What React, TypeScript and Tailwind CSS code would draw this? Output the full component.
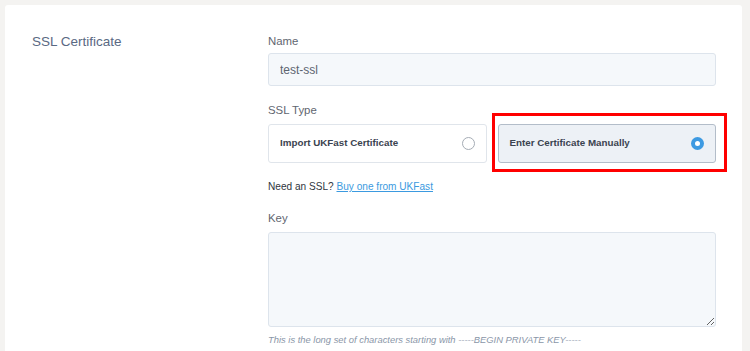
import { useState } from 'react'

const types = [
  { id: 'import', label: 'Import UKFast Certificate' },
  { id: 'manual', label: 'Enter Certificate Manually' },
]

export default function App() {
  const [sslType, setSslType] = useState('manual')

  return (
    <div
      className="h-screen overflow-hidden bg-[#f4f3f1] pl-[5px] pr-[8px] pt-[5px]"
      style={{ fontFamily: '"Liberation Sans", Arial, sans-serif' }}
    >
      <div className="flex min-h-full rounded-t-[3px] bg-white pl-[27px] pr-[26px] pt-[27px] pb-8">
        {/* Section title */}
        <div className="w-[236px] shrink-0">
          <h2 className="text-[13.5px] leading-[20px] text-[#5a6983]">SSL Certificate</h2>
        </div>

        {/* Form */}
        <div className="flex-1">
          <label className="mb-[3px] block text-[11.4px] leading-[18px] text-[#5f6670]">Name</label>
          <input
            defaultValue="test-ssl"
            className="block h-[33px] w-full rounded-[3px] border border-[#dde4ec] bg-[#f5f8fb] px-[11px] text-[12px] text-[#5d6470] outline-none"
          />

          <label className="mt-[15px] mb-[5px] block text-[11.4px] leading-[18px] text-[#5f6670]">SSL Type</label>
          <div className="flex gap-[11px]">
            {types.map((t) => {
              const active = sslType === t.id
              return (
                <div key={t.id} className="relative flex-1">
                  <button
                    onClick={() => setSslType(t.id)}
                    className={
                      active
                        ? 'flex h-[39px] w-full items-center justify-between rounded-[3px] border border-[#b3bdc9] bg-[#edf1f6] pl-[11px] pr-[11px] text-left'
                        : 'flex h-[39px] w-full items-center justify-between rounded-[3px] border border-[#e0e5eb] bg-white pl-[11px] pr-[11px] text-left'
                    }
                  >
                    <span className="text-[9.8px] font-bold text-[#3b4350]">{t.label}</span>
                    {active ? (
                      <span className="flex h-[13px] w-[13px] items-center justify-center rounded-full bg-[#3d9ae2]">
                        <span className="h-[5px] w-[5px] rounded-full bg-white" />
                      </span>
                    ) : (
                      <span className="h-[13px] w-[13px] rounded-full border border-[#a5acb5] bg-white" />
                    )}
                  </button>
                  {active && (
                    <div className="pointer-events-none absolute -top-[11px] -bottom-[9px] -left-[6px] -right-[11px] border-[3px] border-[#ff0000]" />
                  )}
                </div>
              )
            })}
          </div>

          <p className="mt-[17px] text-[10.1px] leading-[14px] text-[#2f3540]">
            Need an SSL?{' '}
            <a href="#" className="text-[#3b9ae0] underline">
              Buy one from UKFast
            </a>
          </p>

          <label className="mt-[15px] mb-[5px] block text-[11.4px] leading-[18px] text-[#5f6670]">Key</label>
          <textarea className="block h-[95px] w-full resize-y rounded-[3px] border border-[#dde4ec] bg-[#f5f8fb] px-[11px] py-2 text-[12px] outline-none" />
          <p className="mt-[6px] text-[9.4px] italic leading-[14px] text-[#8a96a8]">
            This is the long set of characters starting with -----BEGIN PRIVATE KEY-----
          </p>
        </div>
      </div>
    </div>
  )
}
